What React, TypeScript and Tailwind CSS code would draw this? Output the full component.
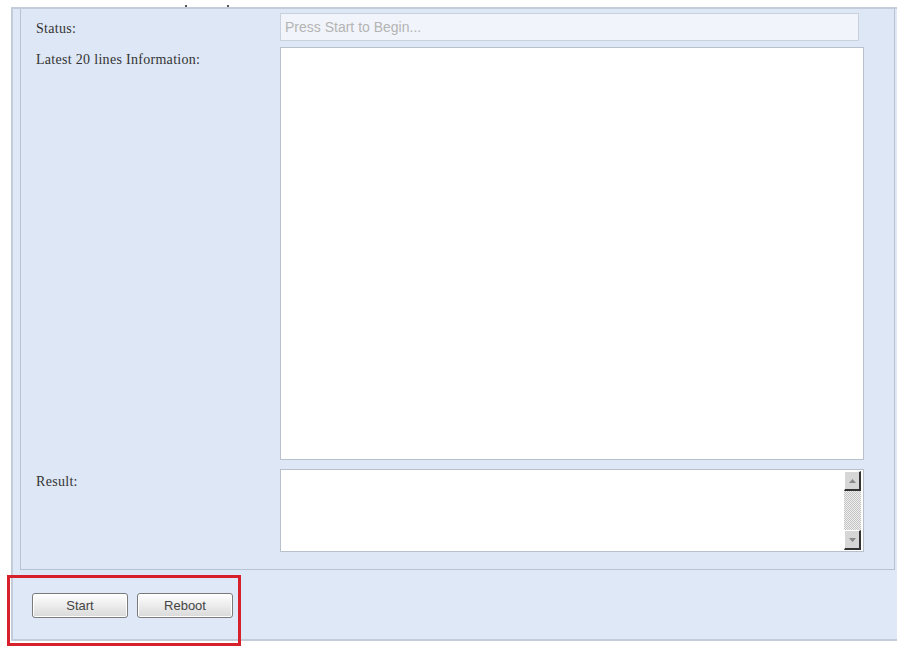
export default function App() {
  return (
    <div className="relative w-[900px] h-[646px] overflow-hidden bg-white font-['Liberation_Sans',Arial,sans-serif]">
      {/* top strip with the cut-off tick marks */}
      <div className="flex h-[7px] items-end gap-[40px] pl-[185px]">
        <span className="block w-[2px] h-[2px] bg-[#555]" />
        <span className="block w-[2px] h-[2px] bg-[#555]" />
      </div>

      <div className="ml-[11px] w-[886px] h-[634px] border-t-2 border-l-2 border-b-2 border-[#c3ccd8] bg-[#dfe8f6] flex flex-col">
        {/* form panel */}
        <div className="ml-[7px] mr-[2px] h-[561px] border-l border-r border-b border-[#b6c3d4] bg-[#dee7f5] flex flex-col gap-[6px] pt-[4px] pr-[29px]">
          <div className="flex">
            <div className="w-[259px] pl-[15px] pt-[5px] text-[14px] tracking-[0.3px] text-[#333] font-['Liberation_Serif',serif]">
              Status:
            </div>
            <div className="w-[579px] h-[28px] border border-[#c9d1dc] bg-[#f1f4fa] flex items-center pl-[4px] text-[14px] text-[#b4b4b4]">
              Press Start to Begin...
            </div>
          </div>

          <div className="flex">
            <div className="w-[259px] pl-[15px] pt-[2px] text-[14px] tracking-[0.3px] text-[#333] font-['Liberation_Serif',serif]">
              Latest 20 lines Information:
            </div>
            <div className="w-[584px] h-[413px] border border-[#b8c0cc] bg-white" />
          </div>

          <div className="flex mt-[3px]">
            <div className="w-[259px] pl-[15px] pt-[2px] text-[14px] tracking-[0.3px] text-[#333] font-['Liberation_Serif',serif]">
              Result:
            </div>
            <div className="w-[584px] h-[83px] border border-[#b8c0cc] bg-white flex justify-end pr-[2px] py-[1px]">
              <div className="w-[17px] flex flex-col">
                <div className="h-[20px] bg-[#d6d6d6] border-r-2 border-b-2 border-[#333] border-t border-l border-t-white border-l-white flex items-center justify-center">
                  <svg width="7" height="4" viewBox="0 0 7 4">
                    <path d="M0 4 L3.5 0 L7 4 Z" fill="#888" />
                  </svg>
                </div>
                <div className="flex-1 bg-[repeating-conic-gradient(#c4c4c4_0%_25%,#eeeeee_0%_50%)] bg-[length:2px_2px]" />
                <div className="h-[20px] bg-[#d6d6d6] border-r-2 border-b-2 border-[#333] border-t border-l border-t-white border-l-white flex items-center justify-center">
                  <svg width="7" height="4" viewBox="0 0 7 4">
                    <path d="M0 0 L3.5 4 L7 0 Z" fill="#888" />
                  </svg>
                </div>
              </div>
            </div>
          </div>
        </div>

        {/* buttons */}
        <div className="flex gap-[9px] pl-[19px] pt-[23px]">
          <button className="w-[96px] h-[25px] rounded-[3px] border border-[#7a7a7a] bg-gradient-to-b from-white to-[#d9d9d9] text-[13px] text-[#444] shadow-[inset_0_0_0_1px_#ffffff]">
            Start
          </button>
          <button className="w-[96px] h-[25px] rounded-[3px] border border-[#7a7a7a] bg-gradient-to-b from-white to-[#d9d9d9] text-[13px] text-[#444] shadow-[inset_0_0_0_1px_#ffffff]">
            Reboot
          </button>
        </div>
      </div>

      {/* red annotation frame */}
      <div className="absolute left-[7px] top-[575px] w-[234px] h-[71px] border-[3px] border-[#d6202c]" />
    </div>
  );
}
